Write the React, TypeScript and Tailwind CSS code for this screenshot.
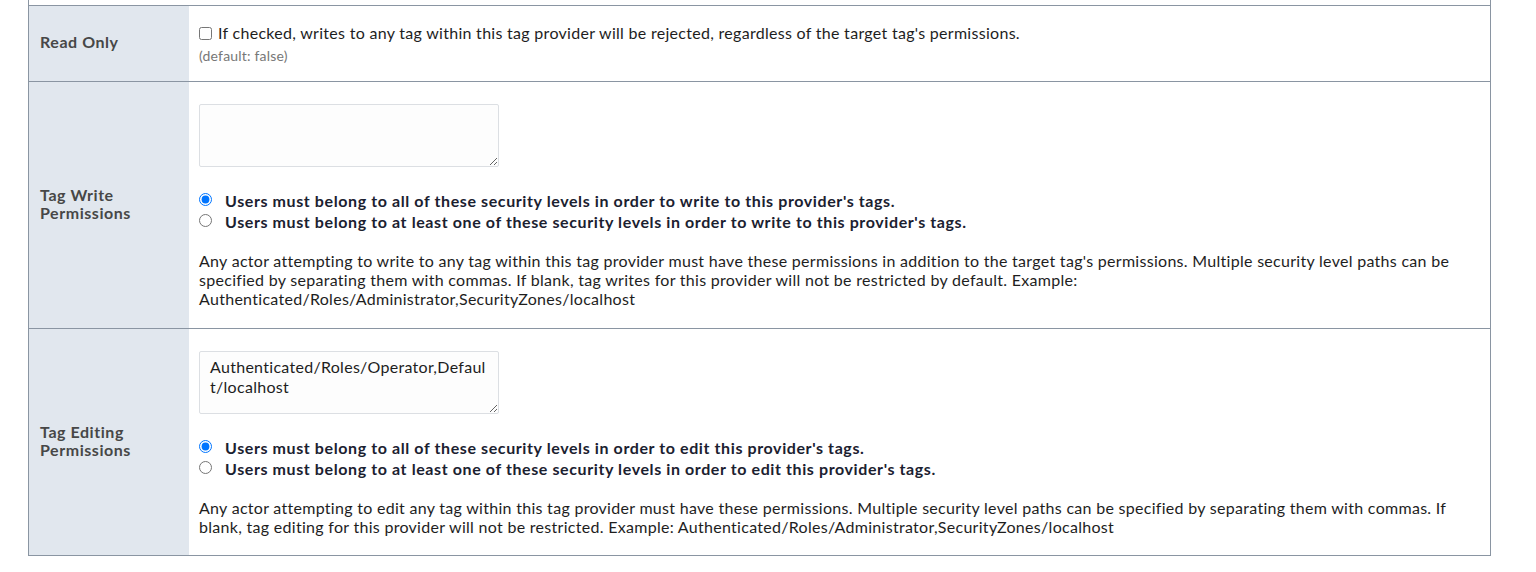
import { ReactNode } from 'react'

type RadioOpt = { label: string; checked: boolean }

function Row({ label, children }: { label: ReactNode; children: ReactNode }) {
  return (
    <div className="flex border-t border-[#8a95a2]">
      <div className="flex w-[160px] shrink-0 items-center bg-[#e1e7ee] pb-[3px] pl-[11px] pr-2 text-[16px] font-bold leading-[18px] tracking-[0.55px] text-[#474747]">
        {label}
      </div>
      <div className="min-w-0 flex-1 pl-[10px] pr-[12px]">{children}</div>
    </div>
  )
}

function PermissionBlock({ name, value, options, help }: { name: string; value: string; options: RadioOpt[]; help: string[] }) {
  return (
    <>
      <textarea
        defaultValue={value}
        className="block h-[63px] w-[300px] resize rounded-[2px] border border-[#dcdfe3] bg-[#fdfdfd] pb-[4px] pl-[10px] pr-[12px] pt-[5px] text-[16px] leading-[20px] tracking-[0.29px] text-[#1e1e1e] outline-none"
      />
      <div className="mt-[23px]">
        {options.map((o) => (
          <label key={o.label} className="flex items-start text-[16px] font-bold leading-[21px] tracking-[0.6px] text-[#1b2130]">
            <input type="radio" name={name} defaultChecked={o.checked} className="mr-[13px] mt-[3px] h-[13px] w-[13px] shrink-0" />
            <span>{o.label}</span>
          </label>
        ))}
      </div>
      <p className="mt-[19px] whitespace-nowrap text-[16px] leading-[19px] tracking-[0.29px] text-[#1e1e1e]">
        {help.map((line, i) => (
          <span key={i}>
            {line}
            {i < help.length - 1 && <br />}
          </span>
        ))}
      </p>
    </>
  )
}

export default function App() {
  return (
    <div className="min-h-screen bg-white font-['Lato','Liberation_Sans',sans-serif]">
      <div className="ml-[28px] w-[1463px] border-x border-b border-[#8a95a2]">
        <div className="h-[5px]" />

        <Row label="Read Only">
          <div className="pb-[17px] pt-[16px]">
            <label className="flex items-start text-[16px] leading-[21px] tracking-[0.29px] text-[#1e1e1e]">
              <input type="checkbox" className="mr-[6px] mt-[5px] h-[13px] w-[13px] shrink-0" />
              <span>If checked, writes to any tag within this tag provider will be rejected, regardless of the target tag's permissions.</span>
            </label>
            <div className="mt-[5px] text-[14px] leading-[16px] tracking-[0.2px] text-[#777]">(default: false)</div>
          </div>
        </Row>

        <Row label={<span>Tag Write<br />Permissions</span>}>
          <div className="pb-[20px] pt-[22px]">
            <PermissionBlock
              name="write"
              value=""
              options={[
                { label: "Users must belong to all of these security levels in order to write to this provider's tags.", checked: true },
                { label: "Users must belong to at least one of these security levels in order to write to this provider's tags.", checked: false },
              ]}
              help={[
                "Any actor attempting to write to any tag within this tag provider must have these permissions in addition to the target tag's permissions. Multiple security level paths can be",
                'specified by separating them with commas. If blank, tag writes for this provider will not be restricted by default. Example:',
                'Authenticated/Roles/Administrator,SecurityZones/localhost',
              ]}
            />
          </div>
        </Row>

        <Row label={<span>Tag Editing<br />Permissions</span>}>
          <div className="pb-[19px] pt-[22px]">
            <PermissionBlock
              name="edit"
              value="Authenticated/Roles/Operator,Default/localhost"
              options={[
                { label: "Users must belong to all of these security levels in order to edit this provider's tags.", checked: true },
                { label: "Users must belong to at least one of these security levels in order to edit this provider's tags.", checked: false },
              ]}
              help={[
                'Any actor attempting to edit any tag within this tag provider must have these permissions. Multiple security level paths can be specified by separating them with commas. If',
                'blank, tag editing for this provider will not be restricted. Example: Authenticated/Roles/Administrator,SecurityZones/localhost',
              ]}
            />
          </div>
        </Row>
      </div>
    </div>
  )
}
